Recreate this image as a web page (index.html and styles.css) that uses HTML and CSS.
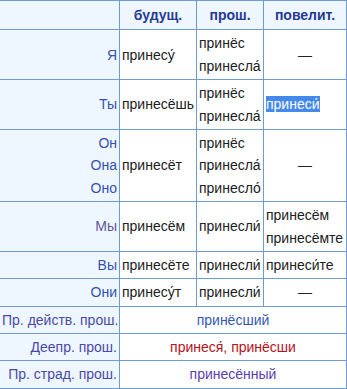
FILE: index.html
```html
<!DOCTYPE html>
<html lang="ru">
<head>
<meta charset="utf-8">
<link rel="stylesheet" href="styles.css">
</head>
<body>
<table class="conj">
  <colgroup>
    <col class="c1"><col class="c2"><col class="c3"><col class="c4">
  </colgroup>
  <tr>
    <th class="corner"></th>
    <th class="head">будущ.</th>
    <th class="head">прош.</th>
    <th class="head">повелит.</th>
  </tr>
  <tr>
    <td class="label pron">Я</td>
    <td>принесу́</td>
    <td>принёс<br>принесла́</td>
    <td class="center">—</td>
  </tr>
  <tr>
    <td class="label pron">Ты</td>
    <td>принесёшь</td>
    <td>принёс<br>принесла́</td>
    <td><span class="sel">принеси́</span></td>
  </tr>
  <tr>
    <td class="label pron">Он<br>Она<br>Оно</td>
    <td>принесёт</td>
    <td>принёс<br>принесла́<br>принесло́</td>
    <td class="center">—</td>
  </tr>
  <tr>
    <td class="label visited">Мы</td>
    <td>принесём</td>
    <td>принесли́</td>
    <td>принесём<br>принесёмте</td>
  </tr>
  <tr>
    <td class="label pron">Вы</td>
    <td>принесёте</td>
    <td>принесли́</td>
    <td>принеси́те</td>
  </tr>
  <tr>
    <td class="label pron">Они</td>
    <td>принесу́т</td>
    <td>принесли́</td>
    <td class="center">—</td>
  </tr>
  <tr>
    <td class="label part">Пр. действ. прош.</td>
    <td colspan="3" class="center blue">принёсший</td>
  </tr>
  <tr>
    <td class="label part">Деепр. прош.</td>
    <td colspan="3" class="center red">принеся́, принёсши</td>
  </tr>
  <tr>
    <td class="label part">Пр. страд. прош.</td>
    <td colspan="3" class="center purple">принесённый</td>
  </tr>
</table>
</body>
</html>
```

FILE: styles.css
```css
html, body {
  margin: 0;
  padding: 0;
  background: #ffffff;
}

body {
  font-family: "Liberation Sans", Arial, sans-serif;
  font-size: 14px;
  line-height: 1.6;
  color: #202122;
}

.conj {
  border-collapse: collapse;
  table-layout: fixed;
  width: 347px;
  margin-left: -1px;
}

.c1 { width: 120px; }
.c2 { width: 77px; }
.c3 { width: 67px; }
.c4 { width: 83px; }

.conj th,
.conj td {
  border: 1px solid #6e9bd1;
  padding: 2px 2px;
  vertical-align: middle;
  text-align: left;
  white-space: nowrap;
}

.conj th {
  background: #eef7ff;
  padding: 3px 2px;
}

.head {
  text-align: center !important;
  font-weight: bold;
  color: #263a94;
}

.label {
  background: #eef7ff;
  text-align: right !important;
}

.pron { color: #3650b0; }
.visited { color: #62559c; }
.part { color: #4c49a6; }

.center { text-align: center !important; }

.blue { color: #3558b8; }
.red { color: #b5121b; }
.purple { color: #5a3fae; }

.sel {
  background: #4589ee;
  color: #ffffff;
}
```
